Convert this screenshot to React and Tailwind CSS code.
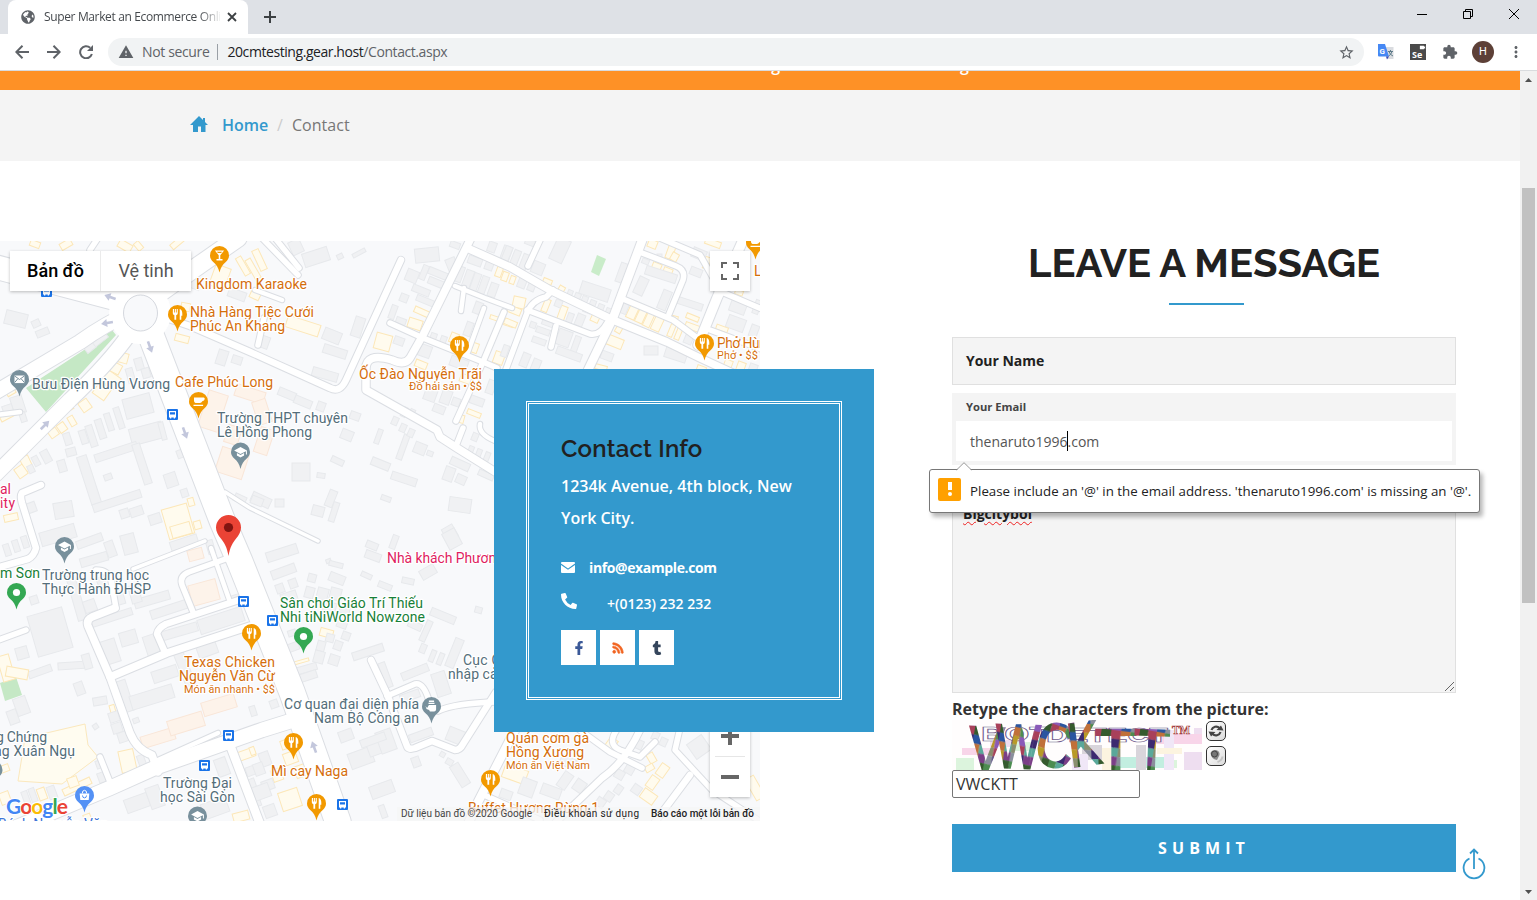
import React from "react";
import { MdStarBorder, MdExtension, MdWarning, MdMoreVert, MdVideocam } from "react-icons/md";
import { FaGlobeAmericas, FaPhoneAlt, FaFacebookF, FaRss, FaTumblr } from "react-icons/fa";

/* ---------- Map data (viewBox units are page pixels) ---------- */

const ROADS = [
  [26, "M147 325 L222 520 L240 562 L292 692 L338 822"],
  [15, "M132 312 Q105 324 80 342 L-4 392"],
  [15, "M130 333 Q110 362 70 400 L-4 474"],
  [24, "M-4 267 L140 305"],
  [18, "M150 300 L195 268 L238 238"],
  [7, "M160 316 L190 326 L250 352 L330 388 Q340 393 346 380 L401 260"],
  [8, "M471 238 L423 335 L410 358 Q405 366 392 360 Q365 352 366 370 L366 390 L437 430 L440 437 L457 448 L497 473"],
  [6, "M390 323 L423 338 L483 362 L497 368"],
  [8, "M467 248 L510 267 L550 290 L613 320 L667 342 L700 358 L765 388"],
  [9, "M643 238 L613 318 L588 370"],
  [10, "M744 238 L717 298 L698 345"],
  [6, "M642 253 L676 266 Q686 270 683 280 L669 314"],
  [6, "M623 299 L673 320 L700 340"],
  [6, "M505 372 L527 313 Q532 300 546 297 L553 290"],
  [6, "M527 310 L590 334 Q600 336 607 323"],
  [6, "M556 326 L551 347"],
  [6, "M528 266 L541 238"],
  [5, "M455 286 L485 298 L512 308"],
  [6, "M504 312 L483 362 L456 421"],
  [5, "M464 288 L461 311"],
  [5, "M484 308 L468 352"],
  [6, "M717 290 L764 310"],
  [6, "M710 330 L764 350"],
  [6, "M660 238 L700 255 L720 290"],
  [6, "M463 428 L456 446"],
  [5, "M480 424 Q478 434 495 441"],
  [4, "M225 492 L250 508 L318 541"],
  [7, "M41 485 L22 493 Q20 496 22 503 L36 548 Q34 556 28 559 L-4 568"],
  [8, "M115 608 L92 617 Q86 620 88 626 L110 677 L130 733 Q137 750 152 755 L158 772"],
  [6, "M116 608 L111 580 Q108 570 96 570"],
  [15, "M-4 836 L110 788 L157 767 L262 730 L294 720"],
  [8, "M110 677 L167 653 L250 626"],
  [7, "M164 650 L157 634 Q158 628 166 624 L248 597"],
  [6, "M193 612 L182 585 Q179 576 189 572 L234 556"],
  [5, "M211 548 L230 602"],
  [4, "M133 569 L205 541"],
  [6, "M100 757 L112 787"],
  [9, "M230 745 L260 824"],
  [5, "M158 760 L218 733"],
  [6, "M-4 641 L26 630"],
  [7, "M371 660 L387 694 L407 746 Q408 750 415 748 L432 741 L455 750 Q460 750 463 744 L496 692"],
  [6, "M387 696 L415 684 Q424 682 430 704"],
  [6, "M438 711 Q455 703 497 702"],
  [9, "M516 728 L478 802 L468 824"],
  [6, "M484 795 L540 820"],
  [7, "M640 730 Q625 762 602 778 L556 822"],
  [6, "M577 728 L610 752 L642 768"],
  [6, "M618 728 Q606 744 620 750 L640 757 L655 742"],
  [6, "M680 728 L675 750 L712 790 L764 824"],
  [7, "M690 775 L655 822"],
  [6, "M100 235 L90 250"],
  [6, "M262 238 L298 275"],
  [6, "M258 345 L264 318"],
  [5, "M255 290 L282 300"],
  [6, "M275 238 L299 268"],
  [5, "M-4 415 L20 412"],
];

// x, y, width, height, rotation, tone (g grey, y yellow, o cream-orange)
const BUILDINGS = [
  [5, 312, 22, 14, 14, "g"], [32, 320, 8, 7, -25, "g"], [36, 329, 13, 7, -22, "g"],
  [84, 342, 11, 9, -38, "g"], [91, 333, 16, 10, -38, "g"],
  [119, 353, 9, 10, 15, "y"], [110, 363, 11, 10, 28, "y"], [103, 373, 16, 13, 35, "y"], [95, 384, 14, 14, 35, "y"], [80, 400, 10, 11, -35, "y"], [68, 405, 5, 5, -30, "y"], [69, 416, 6, 10, -30, "y"], [58, 423, 8, 9, -35, "y"], [49, 429, 9, 8, -35, "y"],
  [22, 456, 9, 15, -25, "y"], [16, 466, 10, 11, -35, "y"], [6, 388, 9, 7, -30, "y"], [0, 414, 14, 5, -28, "y"],
  [135, 358, 8, 12, -16, "g"], [127, 368, 7, 15, -16, "g"], [142, 368, 8, 10, -16, "g"], [124, 396, 28, 20, -15, "g"],
  [116, 407, 6, 22, -18, "g"], [106, 413, 6, 18, -18, "g"], [97, 419, 7, 20, -18, "g"], [88, 425, 7, 22, -18, "g"], [80, 430, 7, 14, -18, "g"], [64, 433, 7, 12, -18, "g"], [66, 448, 10, 8, -15, "g"],
  [42, 450, 8, 13, -28, "g"], [33, 456, 6, 10, -28, "g"], [58, 460, 8, 12, -16, "g"], [28, 465, 6, 8, -25, "g"],
  [130, 425, 33, 17, -15, "g"], [160, 422, 5, 18, -15, "g"], [84, 455, 10, 50, -18, "g"], [94, 448, 44, 8, -18, "g"], [138, 443, 8, 42, -18, "g"], [92, 497, 50, 8, -18, "g"], [104, 474, 8, 6, -20, "g"],
  [12, 396, 12, 18, -18, "g"], [3, 405, 10, 10, -18, "g"], [20, 412, 6, 10, -18, "g"],
  [165, 506, 26, 31, -16, "y"], [188, 498, 6, 8, -16, "y"], [194, 521, 7, 8, -16, "y"], [4, 514, 14, 7, -12, "y"],
  [120, 509, 9, 9, -18, "g"], [130, 507, 13, 9, -18, "g"], [149, 514, 12, 10, -18, "g"], [165, 473, 12, 14, -18, "g"], [181, 489, 7, 8, -18, "g"], [54, 502, 19, 16, -10, "g"], [40, 528, 36, 14, -16, "g"], [24, 503, 12, 10, -20, "g"],
  [177, 450, 6, 8, -20, "g"], [234, 495, 12, 8, 25, "g"], [251, 495, 20, 10, 25, "g"],
  [203, 392, 20, 38, 18, "o"], [235, 388, 30, 12, 18, "o"], [218, 450, 28, 26, 18, "o"], [257, 428, 14, 26, 18, "o"], [255, 400, 14, 24, -18, "o"], [226, 426, 14, 18, 18, "o"],
  // top left strip
  [30, 241, 10, 6, 20, "y"], [60, 241, 12, 7, -30, "y"], [118, 242, 14, 8, 30, "y"], [134, 243, 9, 6, 50, "y"], [170, 240, 14, 6, -40, "y"], [175, 335, 14, 7, 15, "y"], [181, 303, 9, 8, 10, "y"], [212, 266, 16, 22, 20, "y"], [240, 256, 6, 20, -30, "y"], [250, 258, 6, 22, -30, "y"], [256, 249, 7, 22, -25, "y"], [250, 292, 10, 7, 25, "y"], [190, 277, 11, 12, 20, "g"], [228, 290, 18, 9, 20, "g"], [217, 350, 10, 15, 18, "g"], [232, 356, 10, 8, 18, "g"],
  [290, 240, 12, 14, -25, "g"], [303, 250, 26, 14, -18, "g"], [337, 254, 6, 5, -25, "g"], [352, 251, 14, 4, -28, "g"], [415, 248, 24, 14, -6, "g"],
  [286, 320, 34, 12, 18, "y"], [323, 330, 18, 12, 22, "g"], [323, 347, 24, 9, 18, "g"], [353, 317, 10, 20, 18, "g"], [312, 370, 26, 9, 16, "g"], [259, 336, 10, 12, 20, "g"], [278, 390, 18, 8, 22, "g"], [294, 398, 18, 8, 22, "g"], [317, 402, 8, 9, 20, "g"], [350, 412, 10, 8, 20, "g"], [341, 430, 12, 10, 22, "g"], [376, 429, 5, 15, 20, "g"], [400, 434, 6, 26, 20, "g"], [414, 443, 12, 11, 22, "g"], [427, 451, 6, 5, 20, "g"], [331, 458, 13, 6, 25, "g"], [292, 463, 18, 18, 0, "g"], [317, 473, 8, 5, 8, "g"], [371, 460, 19, 8, 22, "g"], [391, 475, 26, 8, 18, "g"], [381, 496, 10, 5, 20, "g"], [275, 499, 9, 8, 0, "g"], [251, 497, 12, 8, 22, "g"], [327, 490, 8, 17, 22, "g"], [331, 502, 6, 20, 18, "g"], [312, 506, 12, 10, 15, "g"], [449, 498, 22, 14, 8, "g"], [444, 526, 12, 14, -30, "g"],
  [406, 270, 12, 12, 22, "g"], [421, 265, 6, 15, 22, "g"], [428, 270, 20, 7, 22, "g"], [428, 279, 16, 7, 22, "g"], [412, 287, 18, 7, 22, "g"], [400, 294, 8, 8, 22, "g"], [416, 298, 20, 6, 22, "g"], [390, 305, 6, 14, 20, "g"], [396, 318, 10, 6, 20, "g"], [414, 309, 16, 6, 24, "y"], [408, 319, 14, 10, 18, "y"], [375, 334, 16, 16, 15, "y"], [394, 337, 10, 8, 20, "g"], [419, 345, 12, 12, 20, "g"], [415, 361, 12, 7, 22, "y"],
  [447, 258, 10, 14, -22, "g"], [450, 242, 10, 6, 20, "g"], [455, 266, 8, 16, 20, "g"], [464, 270, 8, 18, 20, "g"], [472, 273, 7, 18, 20, "g"], [480, 276, 7, 18, 20, "g"], [489, 283, 8, 14, 20, "g"], [468, 257, 14, 8, 20, "g"], [485, 262, 8, 8, 20, "g"], [488, 242, 8, 10, 20, "g"], [502, 246, 9, 14, 20, "g"], [496, 267, 6, 10, 20, "y"], [502, 272, 6, 9, 20, "y"], [510, 276, 5, 8, 20, "y"], [490, 316, 9, 4, 18, "y"], [502, 321, 12, 5, 18, "y"], [494, 352, 10, 12, 20, "y"], [450, 333, 8, 10, 22, "y"], [472, 343, 6, 10, 20, "y"], [430, 333, 6, 10, 20, "g"], [440, 336, 6, 10, 20, "g"], [465, 322, 7, 14, 20, "g"], [474, 302, 8, 12, 20, "g"], [450, 358, 18, 10, 20, "g"], [487, 380, 8, 14, 20, "g"], [460, 375, 12, 8, 20, "y"], [425, 385, 12, 16, 20, "g"], [441, 390, 10, 14, 20, "g"], [433, 405, 12, 8, 22, "g"], [467, 411, 14, 5, 22, "y"], [459, 415, 5, 8, 15, "y"], [452, 398, 8, 8, 20, "g"], [470, 397, 14, 8, 20, "g"], [402, 407, 5, 10, 24, "g"], [409, 409, 5, 10, 24, "g"], [392, 417, 6, 8, 24, "g"], [400, 424, 6, 8, 24, "g"], [408, 429, 6, 8, 24, "g"], [472, 433, 6, 8, 22, "g"], [468, 446, 5, 10, 22, "g"], [476, 449, 5, 10, 22, "g"], [484, 452, 5, 12, 22, "g"], [450, 460, 20, 8, 24, "g"], [444, 467, 10, 14, 20, "g"], [456, 475, 10, 9, 24, "g"], [478, 472, 16, 6, 24, "g"],
  // top right
  [503, 246, 7, 18, 22, "g"], [512, 250, 7, 16, 22, "g"], [521, 254, 7, 16, 22, "g"], [532, 262, 12, 12, 22, "g"], [553, 238, 14, 24, 25, "g"], [525, 240, 14, 6, 22, "g"], [518, 278, 8, 10, 22, "g"], [528, 282, 7, 9, 22, "g"], [543, 279, 9, 5, 22, "y"], [558, 286, 6, 8, 30, "y"], [567, 290, 5, 9, 22, "g"], [574, 293, 6, 10, 22, "g"], [581, 296, 6, 11, 22, "g"], [589, 300, 6, 11, 22, "g"], [597, 304, 6, 11, 22, "g"], [605, 308, 5, 11, 22, "g"], [580, 285, 30, 13, 18, "g"], [618, 263, 9, 20, 20, "g"],
  [513, 297, 12, 11, 12, "y"], [508, 307, 13, 7, 22, "y"], [504, 320, 13, 6, 22, "y"], [543, 299, 6, 13, 22, "y"], [559, 306, 7, 14, 20, "y"], [567, 313, 6, 10, 20, "g"], [576, 314, 8, 12, 22, "g"], [591, 315, 8, 7, 25, "y"], [555, 300, 7, 7, 22, "g"], [584, 304, 8, 9, 22, "g"], [557, 330, 14, 16, 20, "g"], [573, 336, 6, 16, 20, "g"], [556, 350, 26, 8, 20, "g"], [536, 328, 14, 6, 20, "g"], [532, 338, 14, 6, 20, "g"], [530, 322, 6, 6, 20, "g"], [542, 320, 12, 6, 20, "g"], [521, 353, 8, 14, 22, "g"], [532, 359, 8, 12, 22, "g"], [502, 345, 6, 12, 20, "g"],
  [616, 325, 6, 8, 30, "y"], [607, 337, 16, 10, 22, "y"], [644, 346, 14, 9, 0, "g"], [665, 348, 22, 12, 18, "g"], [601, 352, 12, 8, 20, "g"], [595, 365, 12, 5, 15, "y"],
  [628, 305, 9, 14, 25, "y"], [637, 309, 8, 14, 25, "y"], [645, 313, 7, 14, 25, "y"], [653, 316, 9, 15, 25, "y"], [622, 302, 6, 12, 22, "g"], [669, 324, 5, 13, 22, "y"], [676, 327, 5, 13, 22, "y"], [686, 315, 13, 5, 22, "y"], [685, 324, 15, 6, 20, "y"], [671, 316, 7, 4, 15, "y"], [685, 332, 8, 12, 22, "g"], [675, 300, 28, 7, 18, "g"], [660, 290, 9, 20, 22, "g"], [636, 277, 10, 18, 25, "g"], [652, 263, 9, 8, 22, "y"], [663, 268, 9, 8, 22, "y"], [642, 259, 7, 5, 22, "g"], [645, 270, 32, 9, 18, "g"], [667, 245, 7, 14, 20, "y"], [648, 240, 9, 8, 22, "y"], [671, 253, 7, 8, 30, "y"], [657, 254, 5, 8, 0, "g"], [690, 268, 12, 8, 22, "g"], [704, 257, 6, 12, 18, "y"], [692, 249, 14, 10, 22, "g"], [705, 240, 16, 6, 20, "y"], [730, 301, 16, 12, 20, "g"], [727, 317, 18, 13, 20, "g"], [716, 326, 12, 5, 20, "y"], [754, 300, 6, 14, 20, "g"], [750, 325, 8, 12, 20, "g"], [735, 290, 8, 5, 20, "y"], [724, 360, 8, 9, 20, "y"], [737, 362, 8, 9, 20, "y"], [749, 364, 8, 9, 20, "g"], [697, 366, 9, 5, 20, "y"],
  // lower left
  [4, 544, 6, 12, -18, "g"], [13, 540, 6, 12, -18, "g"], [22, 536, 6, 12, -18, "g"], [76, 537, 27, 8, -20, "g"], [80, 555, 28, 9, -16, "g"], [106, 541, 9, 16, -20, "g"], [122, 534, 14, 20, -15, "g"], [72, 575, 9, 46, -16, "g"], [98, 577, 8, 14, -20, "g"], [112, 590, 12, 15, -16, "g"], [91, 614, 42, 7, -18, "g"], [84, 600, 12, 12, -20, "g"], [134, 595, 36, 9, -16, "g"], [150, 605, 38, 9, -18, "g"], [130, 585, 10, 18, -16, "g"], [160, 627, 38, 9, -16, "g"], [198, 613, 46, 15, -18, "g"], [120, 631, 17, 14, -16, "g"], [145, 635, 13, 20, -18, "g"], [100, 640, 18, 24, -18, "g"], [32, 611, 36, 42, -16, "g"], [58, 662, 30, 7, -4, "g"], [83, 654, 8, 15, -16, "g"], [28, 668, 24, 7, -20, "g"], [16, 647, 12, 12, -16, "g"], [75, 682, 9, 13, -20, "g"], [30, 596, 8, 8, -18, "g"],
  [120, 680, 10, 32, -18, "g"], [130, 690, 44, 14, -17, "g"], [152, 668, 26, 12, -18, "g"], [180, 650, 10, 40, -22, "g"], [197, 642, 20, 14, -20, "g"], [228, 595, 14, 8, -18, "g"],
  [141, 732, 34, 12, -17, "o"], [168, 716, 36, 15, -17, "o"], [202, 698, 34, 14, -17, "o"], [190, 582, 28, 21, -15, "o"], [188, 549, 15, 11, -15, "o"], [170, 538, 28, 9, -18, "g"], [207, 540, 7, 14, -16, "g"], [220, 537, 6, 18, -18, "g"],
  [171, 524, 20, 12, -16, "y"], [0, 655, 12, 26, -16, "y"], [6, 668, 22, 10, 10, "y"], [110, 705, 5, 8, -16, "y"], [120, 750, 15, 22, -12, "y"], [0, 765, 9, 7, -20, "y"], [38, 788, 8, 12, -20, "y"], [62, 783, 30, 7, -25, "y"], [68, 777, 10, 10, -20, "y"], [0, 792, 10, 12, -20, "y"], [236, 750, 19, 9, -20, "y"], [233, 812, 16, 9, -15, "y"], [84, 814, 7, 8, -20, "y"],
  [8, 710, 10, 14, -20, "g"], [15, 697, 13, 18, -20, "g"], [93, 697, 14, 8, -10, "g"], [109, 712, 10, 10, -18, "g"], [112, 723, 10, 10, -18, "g"], [118, 732, 10, 10, -18, "g"], [93, 724, 5, 5, -35, "g"], [133, 718, 6, 5, -20, "g"], [98, 772, 10, 10, -20, "g"], [96, 760, 8, 8, -20, "g"], [138, 755, 7, 11, -20, "g"], [23, 791, 6, 14, -20, "g"], [30, 788, 6, 14, -20, "g"], [48, 786, 8, 13, -20, "g"], [125, 796, 24, 14, -20, "g"], [148, 786, 14, 22, -20, "g"], [216, 758, 12, 18, -20, "g"], [202, 800, 26, 16, -20, "g"], [246, 766, 12, 9, -20, "g"], [242, 780, 14, 12, -20, "g"], [250, 795, 10, 12, -20, "g"], [250, 706, 6, 10, -18, "g"],
  // lower middle
  [266, 548, 32, 10, -18, "g"], [271, 567, 25, 9, -20, "g"], [276, 584, 8, 9, -20, "g"], [289, 579, 8, 9, -20, "g"], [281, 592, 16, 10, -18, "g"], [326, 559, 5, 4, -20, "g"], [329, 562, 14, 5, 14, "g"], [329, 574, 16, 9, 22, "g"], [308, 574, 8, 8, 15, "g"], [366, 542, 12, 7, 22, "g"], [365, 552, 16, 8, 20, "g"], [391, 535, 6, 14, 20, "g"], [361, 573, 11, 5, 24, "g"], [378, 583, 14, 6, 22, "g"], [402, 578, 12, 6, 12, "g"], [420, 567, 16, 10, -30, "g"], [445, 530, 14, 18, -28, "g"], [475, 607, 7, 6, 15, "g"], [305, 587, 9, 11, 15, "g"], [317, 588, 11, 12, 15, "g"], [330, 588, 11, 12, 15, "g"], [323, 602, 13, 10, 15, "g"], [340, 604, 10, 10, 15, "g"], [320, 629, 13, 8, 15, "y"], [337, 620, 10, 8, 20, "g"], [342, 632, 8, 8, 20, "g"], [334, 641, 8, 9, 20, "g"], [317, 641, 8, 10, 15, "g"], [326, 634, 8, 8, 15, "g"], [288, 630, 8, 6, -18, "g"], [287, 643, 12, 8, -20, "g"], [293, 660, 16, 3, -16, "y"], [297, 665, 20, 7, -16, "g"], [300, 672, 17, 8, -18, "g"], [314, 651, 10, 12, 15, "g"], [329, 655, 10, 10, 18, "g"], [352, 648, 32, 8, -18, "g"], [382, 662, 7, 26, -20, "g"], [401, 668, 28, 8, -22, "g"], [430, 612, 26, 8, 22, "g"], [423, 620, 6, 22, 24, "g"], [408, 622, 14, 7, 24, "g"], [420, 644, 6, 9, 22, "g"], [430, 650, 5, 12, 22, "g"], [438, 653, 5, 12, 22, "g"], [450, 638, 9, 30, 22, "g"], [434, 672, 14, 24, -18, "g"], [409, 731, 24, 8, -20, "g"], [447, 729, 18, 14, 22, "g"], [400, 692, 20, 8, -20, "g"],
  [339, 730, 14, 11, -20, "g"], [349, 750, 24, 16, -20, "g"], [367, 737, 16, 18, -20, "g"], [378, 730, 16, 22, -20, "g"], [360, 736, 26, 8, -20, "g"], [370, 783, 24, 13, -20, "g"], [412, 757, 8, 10, -20, "g"], [440, 752, 5, 5, 30, "g"], [446, 759, 7, 6, 30, "g"], [455, 763, 10, 24, -32, "g"], [380, 805, 6, 13, -20, "g"], [270, 700, 8, 8, -20, "g"],
  [281, 740, 8, 9, -20, "y"], [284, 752, 13, 12, -20, "y"], [295, 765, 12, 12, -20, "y"], [280, 790, 20, 19, -18, "y"], [272, 769, 10, 12, -20, "y"], [250, 747, 5, 8, -20, "y"], [260, 752, 10, 14, -20, "g"], [254, 763, 10, 12, -20, "g"], [262, 780, 12, 10, -20, "g"], [252, 785, 18, 14, -20, "g"], [264, 805, 12, 12, -20, "g"],
  // below contact card
  [503, 767, 24, 14, 20, "y"], [520, 779, 15, 17, 20, "g"], [541, 786, 20, 11, 20, "g"], [500, 790, 12, 9, 20, "g"], [494, 800, 10, 7, 20, "y"], [560, 772, 10, 17, 35, "g"], [574, 780, 11, 12, 35, "g"], [607, 738, 9, 11, 35, "y"], [615, 770, 9, 9, 30, "g"], [625, 765, 9, 9, 30, "g"], [648, 753, 7, 10, -30, "y"], [645, 765, 9, 6, -30, "y"], [658, 764, 9, 13, 35, "y"], [648, 776, 9, 13, 35, "y"], [641, 791, 15, 11, 35, "y"], [632, 785, 9, 9, 35, "g"], [615, 785, 7, 9, 35, "g"], [605, 792, 8, 9, 35, "g"], [596, 798, 9, 9, 35, "g"], [690, 738, 18, 18, -35, "g"], [635, 740, 8, 9, 25, "g"], [652, 732, 7, 8, 25, "g"], [660, 738, 7, 8, 25, "g"], [750, 776, 10, 24, -30, "y"], [560, 757, 16, 10, 25, "g"],
];

const TONES = {
  g: "fill-[#f0f1f3] stroke-[#e7e9ec]",
  y: "fill-[#fffbee] stroke-[#fce7b8]",
  o: "fill-[#fdf3ea] stroke-[#f9e6d8]",
};

const PIN = "M0 0 C-1.2 -5 -3.4 -8 -6 -10.2 C-8.3 -12.2 -9.5 -14.4 -9.5 -17 A9.5 9.5 0 0 1 9.5 -17 C9.5 -14.4 8.3 -12.2 6 -10.2 C3.4 -8 1.2 -5 0 0Z";

const GLYPHS = {
  fork: (
    <g className="fill-white stroke-none">
      <path d="M-4.6 -22.5 h1.1 v3.4 h.8 v-3.4 h1.1 v3.4 h.8 v-3.4 h1.1 v4.3 q0 1.6 -1.6 2 v4.4 h-1.8 v-4.4 q-1.6 -.4 -1.6 -2Z" />
      <path d="M2.2 -11.8 v-10.7 q2.6 .8 2.6 4.6 v2.2 h-1 v3.9Z" />
    </g>
  ),
  bar: <path className="fill-white" d="M-4.6 -22 H4.6 L.8 -17.2 V-13.4 H3 V-12 H-3 V-13.4 H-.8 V-17.2Z M-2.6 -20.8 L-1.6 -19.4 H1.6 L2.6 -20.8Z" fillRule="evenodd" />,
  cup: <path className="fill-white" d="M-4.5 -21 H5.2 q1.2 0 1 1.6 q-.2 2 -2.4 2.2 q-.8 1.8 -2.4 1.8 H-1.8 q-2.6 0 -2.7 -2.7Z M-5 -13.8 H4.6 V-12.4 H-5Z" />,
  mail: (
    <g>
      <rect className="fill-white" x="-5" y="-21" width="10" height="7.6" />
      <path className="fill-none stroke-[#78909c] stroke-1" d="M-5 -20.6 L0 -17 L5 -20.6 M-5 -13.8 L-1.8 -17.6 M5 -13.8 L1.8 -17.6" />
    </g>
  ),
  school: <path className="fill-white" d="M-6.4 -18.6 L0 -22 L6.4 -18.6 V-14.4 H5.4 V-17.8 L0 -15 Z M-3.6 -16 L0 -14 L3.6 -16 V-13.6 L0 -11.6 L-3.6 -13.6Z" />,
  dot: <circle className="fill-white" cx="0" cy="-17" r="3.6" />,
  bag: (
    <g>
      <path className="fill-white" d="M-4.8 -19 H4.8 L4.2 -12.4 H-4.2Z" />
      <path className="fill-none stroke-white" d="M-2.2 -19 q0 -3.2 2.2 -3.2 q2.2 0 2.2 3.2" />
      <path className="fill-none stroke-[#5491f5]" d="M-2 -17 q0 2.4 2 2.4 q2 0 2 -2.4" />
    </g>
  ),
  police: <path className="fill-white" d="M-2.6 -23 H2.6 V-21.6 H-2.6Z M-3 -20.8 H3 V-19.6 H-3Z M-6 -17.4 L-4.4 -15.6 L-2.6 -18.6 H4.6 V-14 Q4.4 -12 2.6 -12 H-1.6 L-2.4 -13.6 L-5 -14.4Z" />,
};

const PINS = [
  [219.5, 272.5, "fill-[#f29900]", "bar"], [177.5, 331.5, "fill-[#f29900]", "fork"], [459.5, 362.5, "fill-[#f29900]", "fork"],
  [198.5, 418.5, "fill-[#f29900]", "cup"], [704.5, 360.5, "fill-[#f29900]", "fork"], [251.5, 650.5, "fill-[#f29900]", "fork"],
  [293.5, 759.5, "fill-[#f29900]", "fork"], [316.5, 820.5, "fill-[#f29900]", "fork"], [490.5, 796.5, "fill-[#f29900]", "fork"],
  [755.5, 259.5, "fill-[#f29900]", "cup"], [19.5, 396.5, "fill-[#78909c]", "mail"], [240.5, 469, "fill-[#78909c]", "school"],
  [64.5, 563.5, "fill-[#78909c]", "school"], [431.5, 723.5, "fill-[#78909c]", "police"], [197.5, 833, "fill-[#78909c]", "school"],
  [-7, 787, "fill-[#78909c]", "dot"], [16.5, 609.5, "fill-[#34a853]", "dot"], [303.5, 653.5, "fill-[#34a853]", "dot"], [84.5, 812.5, "fill-[#5491f5]", "bag"],
];

const O = "fill-[#d56e0c]";
const S = "fill-[#546e7a]";
const G = "fill-[#188038]";
const P = "fill-[#e01e5f]";
// text, left x, baseline y, width, colour, small flag
const LABELS = [
  ["Kingdom Karaoke", 196, 289, 111, O], ["Nhà Hàng Tiệc Cưới", 190, 317, 124, O], ["Phúc An Khang", 190, 331, 95, O],
  ["Bưu Điện Hùng Vương", 32, 389, 138, S], ["Cafe Phúc Long", 175, 387, 98, O],
  ["Trường THPT chuyên", 217, 423, 131, S], ["Lê Hồng Phong", 217, 437, 95, S],
  ["Ốc Đào Nguyễn Trãi", 359, 379, 123, O], ["Đồ hải sản • $$", 409, 390, 73, O, 1],
  ["Phở Hùng", 717, 348, 57, O], ["Phở • $$", 717, 359, 41, O, 1], ["L", 754, 276, 7, O],
  ["al", 0, 494, 11, P], ["ity", 0, 508, 15, P], ["m Sơn", 0, 578, 40, G],
  ["Trường trung học", 42, 580, 107, S], ["Thực Hành ĐHSP", 42, 594, 109, S],
  ["Nhà khách Phương", 387, 563, 117, P], ["Sân chơi Giáo Trí Thiếu", 280, 608, 143, G], ["Nhi tiNiWorld Nowzone", 280, 622, 145, G],
  ["Texas Chicken", 184, 667, 91, O], ["Nguyễn Văn Cừ", 179, 681, 96, O], ["Món ăn nhanh • $$", 184, 693, 91, O, 1],
  ["Cục Quản", 463, 665, 62, S], ["nhập cảnh", 448, 679, 65, S],
  ["Cơ quan đại diện phía", 284, 709, 135, S], ["Nam Bộ Công an", 314, 723, 105, S],
  ["Mì cay Naga", 271, 776, 77, O], ["Trường Đại", 163, 788, 69, S], ["học Sài Gòn", 160, 802, 75, S],
  ["g Chứng", -4, 742, 51, S], ["ng Xuân Ngụ", -6, 756, 81, S],
  ["Quán cơm gà", 506, 743, 83, O], ["Hồng Xương", 506, 757, 78, O], ["Món ăn Việt Nam", 506, 769, 84, O, 1],
  ["Buffet Hương Rừng 1", 468, 813, 131, O], ["Bánh Nguyễn Văn", -2, 829, 110, "fill-[#3f76d8]"],
];

const BUSES = [[46.5, 291.5], [172.5, 414.5], [243.5, 601.5], [272.5, 620.5], [228.5, 735.5], [204.5, 765.5], [342.5, 804.5]];
const ARROWS = [[110, 297, 200], [107, 323, 170], [150, 347, 70], [45, 425, -45], [185, 433, 70], [314, 747, -110]];

function CityMap() {
  return (
    <svg className="block h-[580px] w-[760px]" viewBox="0 241 760 580" fontFamily='Roboto, "Open Sans", sans-serif'>
      <rect x="0" y="241" width="760" height="580" className="fill-[#f8f9fb]" />
      <path className="fill-[#c5e8c5]" d="M112 330 L116 335 L46 412 L26 388 L84 350Z" />
      <path className="fill-[#c9ecc9]" d="M597 255 L606 259 L599 276 L591 272Z" />
      <path className="fill-[#c5e8c5]" d="M0 683 L16 677 L22 695 L5 701Z" />
      <path className="fill-[#fffcf0] stroke-[#fbe8bd]" d="M25 738 L85 724 L88 745 L98 757 L62 784 L18 781Z" />
      {BUILDINGS.map(([x, y, w, h, r, t], i) => (
        <rect key={i} x={x} y={y} width={w} height={h} transform={`rotate(${r} ${x + w / 2} ${y + h / 2})`} className={TONES[t]} />
      ))}
      <g fill="none" strokeLinecap="round" strokeLinejoin="round" className="stroke-[#dbdee3]">
        {ROADS.map(([w, d], i) => <path key={i} d={d} strokeWidth={w + 1.5} />)}
      </g>
      <circle cx="140" cy="313" r="31" className="fill-white" />
      <g fill="none" strokeLinecap="round" strokeLinejoin="round" className="stroke-white">
        {ROADS.map(([w, d], i) => <path key={i} d={d} strokeWidth={w - 0.5} />)}
      </g>
      <ellipse cx="140.500" cy="313" rx="17" ry="18" className="fill-[#f8f9fb] stroke-[#d5d8de]" />
      {ARROWS.map(([x, y, r], i) => (
        <path key={i} transform={`translate(${x} ${y}) rotate(${r})`} className="fill-[#c3c7dc]" d="M-6 -1.300 H0 V-4 L6 0 L0 4 V1.300 H-6Z" />
      ))}
      {BUSES.map(([x, y], i) => (
        <g key={i} transform={`translate(${x} ${y})`}>
          <rect x="-5.500" y="-5.500" width="11" height="11" rx="1" className="fill-[#1a73e8]" />
          <path className="fill-white" fillRule="evenodd" d="M-3.500 -3.500 H3.500 V3 H2.500 V4 H1.200 V3 H-1.200 V4 H-2.500 V3 H-3.500Z M-2.500 -2.300 V0 H2.500 V-2.300Z" />
        </g>
      ))}
      <g className="stroke-white stroke-[2.5px]" paintOrder="stroke" strokeLinejoin="round">
        {LABELS.map(([t, x, y, w, c, small], i) => (
          <text key={i} x={x} y={y} textLength={w} className={c} fontSize={small ? 11 : 14}>{t}</text>
        ))}
      </g>
      {PINS.map(([x, y, c, g], i) => (
        <g key={i} transform={`translate(${x} ${y})`}>
          <path d={PIN} className={c} />
          {GLYPHS[g]}
        </g>
      ))}
      <path transform="translate(228.500 556)" className="fill-[#ea4335]" d="M0 0 C-1.500 -9 -4 -13 -7.600 -17.600 C-10.400 -21 -12.500 -24 -12.500 -28.500 A12.500 12.500 0 0 1 12.500 -28.500 C12.500 -24 10.400 -21 7.600 -17.600 C4 -13 1.500 -9 0 0Z" />
      <circle cx="228.500" cy="527.500" r="4.600" className="fill-[#811411]" />
      <rect x="397" y="807" width="363" height="14" className="fill-[#f5f5f5]/75" />
      <g fontSize="10" className="fill-[#444]">
        <text x="401" y="817" textLength="131">Dữ liệu bản đồ ©2020 Google</text>
        <text x="544" y="817" textLength="95" className="fill-[#222]">Điều khoản sử dụng</text>
        <text x="651" y="817" textLength="103" fontWeight="500" className="fill-[#222]">Báo cáo một lỗi bản đồ</text>
      </g>
      <g fontSize="21" fontWeight="700" className="stroke-white stroke-2" paintOrder="stroke" fontFamily='Lato, "Open Sans", sans-serif'>
        <text x="6" y="814" textLength="62">
          <tspan className="fill-[#4285f4]">G</tspan><tspan className="fill-[#ea4335]">o</tspan><tspan className="fill-[#fbbc05]">o</tspan><tspan className="fill-[#4285f4]">g</tspan><tspan className="fill-[#34a853]">l</tspan><tspan className="fill-[#ea4335]">e</tspan>
        </text>
      </g>
    </svg>
  );
}

/* ---------- Browser frame ---------- */

function TabStrip() {
  return (
    <div className="flex h-[34px] bg-[#dee1e6] pl-2">
      <div className="flex h-full w-60 items-center rounded-t-lg bg-white pl-[13px]">
        <FaGlobeAmericas className="size-[14px] text-[#5f6368]" />
        <span className="ml-[9px] w-[176px] overflow-hidden text-[12px] tracking-[-0.36px] whitespace-nowrap text-[#45494d] [mask-image:linear-gradient(to_right,black_155px,transparent_178px)]">
          Super Market an Ecommerce Online
        </span>
        <svg className="ml-[7px] size-[10px]" viewBox="0 0 10 10" stroke="#3c4043" strokeWidth="1.800"><path d="M1 1 L9 9 M9 1 L1 9" /></svg>
      </div>
      <svg className="mt-[11px] ml-4 size-3" viewBox="0 0 12 12" stroke="#3c4043" strokeWidth="2"><path d="M6 0 V12 M0 6 H12" /></svg>
      <svg className="ml-auto h-7 w-[124px]" viewBox="0 0 124 28" fill="none" stroke="#000">
        <path d="M4 14.500 H14" />
        <path d="M50.500 11.500 H57.500 V18.500 H50.500Z M52.500 11 V9.500 H59.500 V16.500 H58" />
        <path d="M96 9 L106 19 M106 9 L96 19" />
      </svg>
    </div>
  );
}

function TranslateIcon() {
  return (
    <svg className="size-4" viewBox="0 0 16 16">
      <path d="M6 3 H15.500 V15 H9Z" fill="#dadce0" />
      <path d="M10 7.500 H15 M12.500 6 V7.500 M11 7.500 Q12 11 15 12 M14 7.500 Q13 11 10.500 12" stroke="#607d8b" fill="none" />
      <path d="M0 0 H7 L11 12.500 H1 Q0 12.500 0 11.500Z" fill="#4688f4" />
      <path d="M8 12.500 H11 L9 15.500Z" fill="#3747b5" />
      <text x="1.500" y="9.500" fontSize="8" fontWeight="700" fill="#fff" fontFamily="Roboto, sans-serif">G</text>
    </svg>
  );
}

function Toolbar() {
  return (
    <div className="flex h-[37px] items-center border-b border-[#d9dbde] bg-white pr-3 pl-[15px] text-[#5f6368]">
      <svg className="size-[14px]" viewBox="0 0 14 14" fill="none" stroke="currentColor" strokeWidth="2"><path d="M14 7 H1.500 M7.500 0.800 L1.300 7 L7.500 13.200" /></svg>
      <svg className="ml-[18px] size-[14px]" viewBox="0 0 14 14" fill="none" stroke="currentColor" strokeWidth="2"><path d="M0 7 H12.500 M6.500 0.800 L12.700 7 L6.500 13.200" /></svg>
      <svg className="ml-[18px] size-[14px]" viewBox="0 0 14 14"><path d="M12.900 9 A6 6 0 1 1 11.200 2.800" fill="none" stroke="currentColor" strokeWidth="2" /><path d="M14 0 V6 H8Z" fill="currentColor" /></svg>
      <div className="ml-[15px] flex h-7 w-[1257px] items-center rounded-full bg-[#f1f3f4] pr-[9px] pl-[10px] text-[14px]">
        <MdWarning className="size-4" />
        <span className="-mt-px ml-2 tracking-[-0.35px]">Not secure</span>
        <span className="ml-[8px] h-4 w-px bg-[#9aa0a6]" />
        <span className="-mt-px ml-[9px] tracking-[-0.43px]"><span className="text-[#202124]">20cmtesting.gear.host</span>/Contact.aspx</span>
        <MdStarBorder className="ml-auto size-[17px]" />
      </div>
      <div className="ml-[14px]"><TranslateIcon /></div>
      <div className="ml-4 flex size-4 flex-col bg-[#4a4a4a] text-white">
        <MdVideocam className="ml-auto size-[7px]" />
        <span className="-mt-px pl-[2px] text-[9px] leading-[9px] font-bold">Se</span>
      </div>
      <MdExtension className="ml-4 size-4" />
      <span className="ml-[14px] flex size-[22px] items-center justify-center rounded-full bg-[#5d4037] font-['Roboto'] text-[11px] text-white">H</span>
      <MdMoreVert className="ml-[13px] size-[18px]" />
    </div>
  );
}

function Scrollbar() {
  return (
    <div className="flex w-[17px] flex-col items-center bg-[#f1f1f1] pt-[7px] pb-[6px]">
      <svg className="h-1 w-[7px]" viewBox="0 0 7 4"><path d="M0 4 L3.500 0 L7 4Z" fill="#505050" /></svg>
      <div className="mt-[106px] h-[415px] w-[13px] bg-[#c1c1c1]" />
      <svg className="mt-auto h-1 w-[7px]" viewBox="0 0 7 4"><path d="M0 0 H7 L3.500 4Z" fill="#505050" /></svg>
    </div>
  );
}

/* ---------- Page ---------- */

function ContactCard() {
  return (
    <div className="absolute top-[128px] left-[494px] h-[363px] w-[380px] bg-[#3399cd] p-8">
      <div className="h-[299px] w-[316px] border-[3px] border-double border-white pt-[27px] pl-[32px] text-white">
        <h3 className="text-[24px] leading-[36px] font-semibold tracking-[0.2px] text-[#212121] [font-family:Raleway,Lato,sans-serif]">Contact Info</h3>
        <p className="mt-[3px] w-[250px] text-[16px] leading-8 font-semibold">1234k Avenue, 4th block, New York City.</p>
        <div className="mt-[21px] flex h-6 items-center">
          <svg className="h-[11px] w-[14px]" viewBox="0 0 14 11" fill="#fff">
            <path d="M0 1 Q0 0 1 0 H13 Q14 0 14 1 V1.500 L7 6.500 L0 1.500Z" />
            <path d="M0 3 L7 7.800 L14 3 V10 Q14 11 13 11 H1 Q0 11 0 10Z" />
          </svg>
          <span className="ml-[14px] text-[14px] font-bold tracking-[-0.38px]">info@example.com</span>
        </div>
        <div className="mt-3 flex h-6 items-center">
          <FaPhoneAlt className="-mt-1 size-4" />
          <span className="ml-[30px] text-[14px] font-semibold">+(0123) 232 232</span>
        </div>
        <div className="mt-[15px] flex gap-1">
          <span className="flex size-[35px] items-center justify-center bg-white"><FaFacebookF className="size-[14px] text-[#3b5998]" /></span>
          <span className="flex size-[35px] items-center justify-center bg-white"><FaRss className="size-3 text-[#f26522]" stroke="currentColor" strokeWidth="28" /></span>
          <span className="flex size-[35px] items-center justify-center bg-white"><FaTumblr className="size-[14px] text-[#35465c]" /></span>
        </div>
      </div>
    </div>
  );
}

function MapPanel() {
  return (
    <div className="relative h-[580px] w-[760px]">
      <div className="h-full overflow-hidden"><CityMap /></div>
      <div className="absolute top-[10px] left-[10px] flex h-10 bg-white font-['Roboto'] text-[18px] leading-10 shadow-[0_1px_3px_rgba(0,0,0,0.25)]">
        <span className="w-[91px] border-r border-[#ebebeb] pl-px text-center font-medium text-black">Bản đồ</span>
        <span className="w-[90px] text-center text-[#565656]">Vệ tinh</span>
      </div>
      <div className="absolute top-[10px] left-[710px] flex size-10 items-center justify-center bg-white shadow-[0_1px_3px_rgba(0,0,0,0.25)]">
        <svg className="size-[18px]" viewBox="0 0 18 18" fill="none" stroke="#666" strokeWidth="2"><path d="M1 6 V1 H6 M12 1 H17 V6 M17 12 V17 H12 M6 17 H1 V12" /></svg>
      </div>
      <div className="absolute top-[475px] left-[710px] h-[81px] w-10 bg-white shadow-[0_1px_3px_rgba(0,0,0,0.25)]">
        <svg className="h-[81px] w-10" viewBox="0 0 40 81"><path d="M11 18 H18 V11 H22 V18 H29 V22 H22 V29 H18 V22 H11Z M11 59 H29 V63 H11Z" fill="#666" /><path d="M5 40.500 H35" stroke="#e6e6e6" /></svg>
      </div>
      <ContactCard />
    </div>
  );
}

// character, x, baseline y, rotation, horizontal scale
const CODE = [["V", 16, 49, 3, 0.92], ["W", 43, 47, 2, 0.84], ["C", 81, 43, 10, 0.92], ["K", 119, 47, -8, 0.86], ["T", 143, 52, 0, 1.22], ["T", 181, 52, 2, 1.05]];
const SPECKS = ["#7b3f87", "#4c8c50", "#2a55a0", "#a8405a", "#b89a28", "#5aa89a", "#8a8f9c", "#355a2e", "#8a5ab8", "#c0703a", "#3c2a70", "#8a8f70"];

function CaptchaPicture() {
  return (
    <svg className="h-[50px] w-[250px]" viewBox="0 0 250 50">
      <defs>
        <pattern id="specks" width="48" height="48" patternUnits="userSpaceOnUse" patternTransform="rotate(8)">
          {Array.from({ length: 36 }, (_, i) => (
            <rect key={i} x={(i % 6) * 8} y={Math.floor(i / 6) * 8} width="8.200" height="8.200" fill={SPECKS[(i * i * 5 + i * 3 + Math.floor(i / 6)) % 12]} />
          ))}
        </pattern>
      </defs>
      <rect width="250" height="50" fill="#fffdfd" />
      <g opacity="0.85">
        <path d="M10 28 H42 V35 H10Z M205 14 H250 V24 H200Z" fill="#f7cfe6" />
        <path d="M4 38 H22 V50 H4Z M60 22 H80 V31 H60Z M198 40 H225 V48 H198Z" fill="#d7f3d8" />
        <path d="M165 37 H216 V48 H165Z M170 38 H200 V44 H160Z" fill="#b8ecdc" />
        <path d="M184 25 H194 V50 H184Z M130 25 H150 V40 H130Z" fill="#d3cfd6" />
        <path d="M212 10 H222 V50 H212Z M120 34 H136 V50 H120Z" fill="#eee4f7" />
        <path d="M232 32 H250 V50 H232Z M38 20 H60 V27 H38Z M242 8 H250 V14 H242Z" fill="#ecd9ee" />
        <path d="M205 28 H230 V34 H205Z M150 28 H165 V50 H150Z" fill="#fcf3dc" />
      </g>
      <g fontFamily='"Liberation Sans", sans-serif' fontWeight="700" fontSize="20" fill="#fff" stroke="#6f5b8c" strokeWidth="0.700">
        <text x="29" y="21" textLength="68" lengthAdjust="spacingAndGlyphs">BOT</text>
        <text x="94" y="22" textLength="122" lengthAdjust="spacingAndGlyphs">DETECT</text>
        <text x="220" y="14" fontSize="12" textLength="18" lengthAdjust="spacingAndGlyphs" fontFamily='"Liberation Serif", serif' stroke="#a33a3a">TM</text>
      </g>
      <g fontFamily='"Liberation Sans", sans-serif' fontSize="56" fill="url(#specks)" stroke="url(#specks)" strokeWidth="2.200">
        {CODE.map(([c, x, y, r, s], i) => (
          <text key={i} transform={`translate(${x} ${y}) rotate(${r}) scale(${s} 1.100)`}>{c}</text>
        ))}
      </g>
    </svg>
  );
}

function CaptchaButton({ children }) {
  return (
    <span className="flex size-5 items-center justify-center rounded-[5px] border border-[#333] bg-linear-to-br from-white to-[#dcdcdc]">
      <svg className="size-4" viewBox="0 0 16 16">{children}</svg>
    </span>
  );
}

function ValidationBubble() {
  return (
    <div className="absolute top-[132px] -left-[23px] flex h-[44px] w-[551px] items-center rounded-[3px] border border-[#777] bg-white pl-2 shadow-[3px_4px_4px_rgba(0,0,0,0.28)]">
      <svg className="absolute -top-[8px] left-[26px] h-[9px] w-[16px]" viewBox="0 0 16 9"><path d="M0 9 L8 0.700 L16 9Z" fill="#fff" /><path d="M0.500 8 L8 0.700 L15.500 8" fill="none" stroke="#999" /></svg>
      <span className="-mt-1 flex size-[23px] items-center justify-center rounded-[2px] bg-[#ffa000]">
        <svg className="h-[14px] w-1" viewBox="0 0 4 14" fill="#fff"><path d="M0 0 H4 V8 H0Z" /><circle cx="2" cy="12" r="2" /></svg>
      </span>
      <span className="mt-px ml-[9px] text-[13.300px] tracking-[0.01px] whitespace-nowrap text-[#222]">
        Please include an '@' in the email address. 'thenaruto1996.com' is missing an '@'.
      </span>
    </div>
  );
}

function MessageForm() {
  return (
    <div className="ml-[192px] w-[504px]">
      <h2 className="text-center text-[40px] leading-[44px] font-bold tracking-[-0.05px] whitespace-nowrap text-[#212121] [font-family:Raleway,Lato,sans-serif]">LEAVE A MESSAGE</h2>
      <div className="mt-[18px] ml-[217px] h-[2px] w-[75px] bg-[#3399cd]" />
      <div className="relative mt-8">
        <div className="h-12 border border-[#e0e0e0] bg-[#f4f4f4] pl-[13px] text-[14px] leading-[46px] font-bold tracking-[-0.02px] text-[#212121]">Your Name</div>
        <div className="mt-2 h-[72px] bg-[#f4f4f4] px-1">
          <div className="h-7 pl-[10px] text-[11.200px] leading-7 font-bold text-[#444]">Your Email</div>
          <div className="flex h-10 items-center bg-white pl-[14px] text-[14px] text-[#555]">
            thenaruto1996<span className="-mr-px -ml-px h-5 w-px bg-black" /><span className="ml-px">.com</span>
          </div>
        </div>
        <div className="mt-2 flex h-[220px] flex-col border border-[#e0e0e0] bg-[#f4f4f4] pt-[30px] pl-[10px] text-[14px] leading-[19px] font-bold text-[#212121]">
          <span className="w-fit underline decoration-[#e22] decoration-wavy decoration-1 underline-offset-[2px]">Bigcityboi</span>
          <svg className="mt-auto mr-px mb-px ml-auto size-[9px]" viewBox="0 0 9 9" stroke="#666" fill="none"><path d="M0 9 L9 0 M5 9 L9 5" /></svg>
        </div>
        <ValidationBubble />
      </div>
      <div className="mt-1 h-[23px] text-[16px] leading-6 font-bold whitespace-nowrap text-[#333]">Retype the characters from the picture:</div>
      <div className="flex h-[50px] gap-1">
        <CaptchaPicture />
        <div className="flex flex-col gap-[5px] pt-px">
          <CaptchaButton>
            <path d="M3.500 7 A4.800 4.800 0 0 1 11.500 5 M12.500 9 A4.800 4.800 0 0 1 4.500 11" fill="none" stroke="#444" strokeWidth="2.200" />
            <path d="M8.500 7 L15.500 7.500 L13 2.500Z M7.500 9 L0.500 8.500 L3 13.500Z" fill="#444" />
          </CaptchaButton>
          <CaptchaButton>
            <path d="M2.500 5 Q4 1.500 8 2 Q12 3 11.500 7 L9 12 Q3 11 2.500 5Z" fill="#8a8a8a" />
            <circle cx="6.500" cy="6" r="3" fill="#777" stroke="#444" />
            <path d="M9.500 14 Q14 12.500 14.500 8.500" fill="none" stroke="#c4c4c4" strokeWidth="2" />
          </CaptchaButton>
        </div>
      </div>
      <div className="h-7 w-[188px] rounded-[2px] border border-[#767676] bg-white pl-[3px] text-[16px] leading-[26px] text-[#333]">VWCKTT</div>
      <div className="mt-[26px] flex h-12 items-center justify-center bg-[#3399cd] text-[16px] font-bold tracking-[5.100px] text-white">SUBMIT</div>
    </div>
  );
}

export default function App() {
  return (
    <div className="flex h-[900px] w-[1537px] flex-col overflow-hidden bg-white [font-family:'Open_Sans','Noto_Sans',sans-serif]">
      <TabStrip />
      <Toolbar />
      <div className="flex min-h-0 flex-1">
        <div className="w-[1520px]">
          <div className="flex h-[19px] justify-center gap-[180px] overflow-hidden bg-[#fe9126] pr-0 pl-[220px] text-[16px] leading-[1px] font-semibold text-white">
            <span className="-mt-[6px] h-1">g</span><span className="-mt-[6px] h-1">g</span>
          </div>
          <div className="flex h-[71px] items-center bg-[#f4f4f4] pb-[2px] pl-[190px] text-[16px] text-[#777]">
            <svg className="-mt-px h-4 w-[18px]" viewBox="0 0 18 16" fill="#3399cd"><path d="M9 0 L13 4 V2 H15 V6 L18 9 H15.500 V16 H11 V10.500 H8 V16 H3 V9 H0Z" /></svg>
            <span className="ml-[14px] font-semibold tracking-[-0.05px] text-[#3399cd]">Home</span>
            <span className="mx-[9px] text-[#ccc]">/</span>
            <span className="tracking-[0.050px]">Contact</span>
          </div>
          <div className="flex pt-20">
            <MapPanel />
            <MessageForm />
            <svg className="mt-[607px] ml-[6px] h-8 w-6 shrink-0" viewBox="0 0 24 32" fill="none" stroke="#3399cd" strokeWidth="1.800">
              <path d="M12 21 V2 M8 5.500 L12 1.500 L16 5.500 M7.500 10.500 A10.400 10.400 0 1 0 16.500 10.500" />
            </svg>
          </div>
        </div>
        <Scrollbar />
      </div>
    </div>
  );
}
